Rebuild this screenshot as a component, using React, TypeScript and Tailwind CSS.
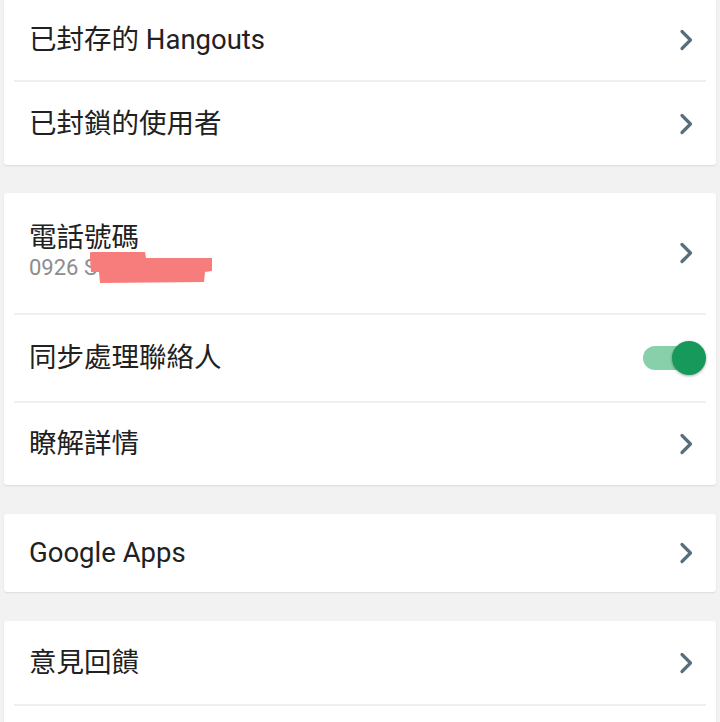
import React from "react";

const font = { fontFamily: "Roboto, 'Noto Sans CJK TC', 'Noto Sans', sans-serif" };

function Chevron() {
  return (
    <svg width="14" height="22" viewBox="0 0 14 22" className="shrink-0">
      <polyline points="3,2.5 11.5,11 3,19.5" fill="none" stroke="#566f7d" strokeWidth="3.2" strokeLinecap="round" strokeLinejoin="round" />
    </svg>
  );
}

function Divider() {
  return <div className="ml-[10px] mr-[10px] h-[2px] bg-[#efefef]" />;
}

function Row({ label, h }: { label: string; h: string }) {
  return (
    <div className={`flex items-center justify-between pl-[25px] pr-[23px] ${h}`}>
      <span className="text-[27.5px] leading-[32px] text-[#212121]">{label}</span>
      <Chevron />
    </div>
  );
}

function Card({ children, className = "" }: { children: React.ReactNode; className?: string }) {
  return (
    <div className={`mx-[4px] bg-white rounded-[3px] shadow-[0_1px_2px_rgba(0,0,0,0.10)] ${className}`}>{children}</div>
  );
}

export default function App() {
  return (
    <div className="w-[720px] h-[722px] overflow-hidden bg-[#f2f2f2] flex flex-col" style={font}>
      <Card className="rounded-t-none">
        <Row label="已封存的 Hangouts" h="h-[80px]" />
        <Divider />
        <Row label="已封鎖的使用者" h="h-[83px]" />
      </Card>
      <div className="h-[28px] shrink-0" />
      <Card>
        <div className="flex items-center justify-between pl-[25px] pr-[23px] h-[120px]">
          <div className="relative flex flex-col">
            <span className="text-[27.5px] leading-[30px] text-[#212121]">電話號碼</span>
            <span className="text-[22px] leading-[30px] text-[#8d8d8d]">0926 S</span>
            <svg className="absolute left-[61px] top-[29px]" width="124" height="32" viewBox="0 0 124 32">
              <path d="M0 6 L0 1 Q0 0 2 0 L55 0 L56 6 L122 6 L122 19 L115 20 L114 30 L10 31 L9 20 L1 20 Z" fill="#f77d7d" />
            </svg>
          </div>
          <Chevron />
        </div>
        <Divider />
        <div className="flex items-center justify-between pl-[25px] pr-[10px] h-[86px]">
          <span className="text-[27.5px] leading-[32px] text-[#212121]">同步處理聯絡人</span>
          <div className="relative w-[63px] h-[34px] flex items-center">
            <div className="w-[48px] h-[24px] rounded-full bg-[#88d0aa]" />
            <div className="absolute right-0 top-0 w-[34px] h-[34px] rounded-full bg-[#16995a] shadow-[0_1px_3px_rgba(0,0,0,0.35)]" />
          </div>
        </div>
        <Divider />
        <Row label="瞭解詳情" h="h-[82px]" />
      </Card>
      <div className="h-[29px] shrink-0" />
      <Card>
        <Row label="Google Apps" h="h-[78px]" />
      </Card>
      <div className="h-[29px] shrink-0" />
      <Card>
        <Row label="意見回饋" h="h-[83px]" />
        <Divider />
        <div className="h-[40px]" />
      </Card>
    </div>
  );
}
